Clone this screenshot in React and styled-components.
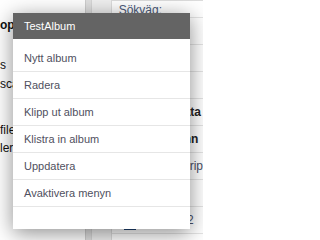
import React from 'react';
import styled, { createGlobalStyle } from 'styled-components';

const GlobalStyle = createGlobalStyle`
  html, body {
    margin: 0;
    padding: 0;
    background: #ffffff;
    font-family: "Liberation Sans", Arial, sans-serif;
  }
`;

const Page = styled.div`
  position: relative;
  width: 203px;
  height: 240px;
  overflow: hidden;
  display: flex;
  background: #f2f2f2;
`;

const LeftPanel = styled.div`
  width: 91px;
  background: #ffffff;
  display: flex;
  flex-direction: column;
  padding-top: 18px;
  font-size: 12px;
  color: #111;
`;

const LeftLine = styled.div`
  height: 14px;
  line-height: 14px;
  margin-top: ${p => p.gap || 0}px;
  font-weight: ${p => (p.bold ? 700 : 400)};
  white-space: nowrap;
`;

const Splitter = styled.div`
  width: 5px;
  background: #e0e0e0;
  border-left: 1px solid #cecece;
  border-right: 1px solid #d6d6d6;
`;

const Gutter = styled.div`
  width: 20px;
  background: #f0f0f0;
`;

const RightPanel = styled.div`
  flex: 1;
  background: #ffffff;
  border-left: 1px solid #dcdcdc;
  border-top: 1px solid #dcdcdc;
  display: flex;
  flex-direction: column;
  font-size: 12px;
`;

const Row = styled.div`
  position: relative;
  flex: none;
  height: ${p => p.h || 26}px;
  border-bottom: 1px solid #e4e4e4;
  display: flex;
  align-items: center;
  padding-left: ${p => p.indent || 7}px;
  white-space: nowrap;
  color: ${p => (p.bold ? '#222' : '#4a5068')};
  font-weight: ${p => (p.bold ? 700 : 400)};
`;

const PathLabel = styled.span`
  color: #4a5a7a;
  margin-top: 2px;
`;

const Underline = styled.div`
  position: absolute;
  left: 12px;
  bottom: 3px;
  width: 12px;
  height: 2px;
  background: #1d3f6e;
`;

const Menu = styled.div`
  position: absolute;
  top: 13px;
  left: 13px;
  width: 177px;
  height: 216px;
  background: #ffffff;
  box-shadow: 0 4px 20px rgba(0, 0, 0, 0.45);
  display: flex;
  flex-direction: column;
`;

const MenuHeader = styled.div`
  height: 26px;
  line-height: 26px;
  padding-left: 11px;
  background: #646464;
  color: #ffffff;
  font-size: 11px;
`;

const MenuList = styled.ul`
  list-style: none;
  margin: 0;
  padding: 6px 0 0;
`;

const MenuItem = styled.li`
  height: 26px;
  line-height: 26px;
  padding-left: 11px;
  border-bottom: 1px solid #e6e6e6;
  color: #4f5060;
  font-size: 11px;
  cursor: pointer;

  &:hover {
    background: #f4f4f4;
  }
`;

const items = [
  'Nytt album',
  'Radera',
  'Klipp ut album',
  'Klistra in album',
  'Uppdatera',
  'Avaktivera menyn',
];

export default function App() {
  return (
    <>
      <GlobalStyle />
      <Page>
        <LeftPanel>
          <LeftLine bold>op</LeftLine>
          <LeftLine gap={26}>s</LeftLine>
          <LeftLine gap={5}>sca</LeftLine>
          <LeftLine gap={32}>file</LeftLine>
          <LeftLine gap={4}>ler</LeftLine>
        </LeftPanel>
        <Splitter />
        <Gutter />
        <RightPanel>
          <Row h={16}>
            <PathLabel>Sökväg:</PathLabel>
          </Row>
          <Row />
          <Row />
          <Row />
          <Row indent={72} bold>ata</Row>
          <Row indent={72} bold>nn</Row>
          <Row indent={72}>crip</Row>
          <Row indent={72}>:</Row>
          <Row indent={72}>
            :2
            <Underline />
          </Row>
        </RightPanel>
        <Menu>
          <MenuHeader>TestAlbum</MenuHeader>
          <MenuList>
            {items.map(label => (
              <MenuItem key={label}>{label}</MenuItem>
            ))}
          </MenuList>
        </Menu>
      </Page>
    </>
  );
}
